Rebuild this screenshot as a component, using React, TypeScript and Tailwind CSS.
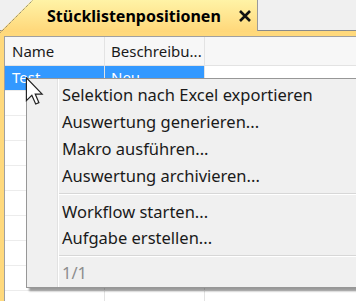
export default function App() {
  const rows = [0, 1, 2, 3, 4, 5, 6, 7, 8, 9];
  return (
    <div className="relative h-[301px] w-[356px] overflow-hidden bg-[#f0f0f0] font-['Noto_Sans',sans-serif] text-[#1a1a1a]">
      {/* tab strip */}
      <div className="flex h-[31px] border-b border-[#8a8a8a]">
        <div className="relative flex h-[32px] w-[257px] shrink-0 items-center bg-gradient-to-b from-[#fff3a6] to-[#ffd779] pl-[47px] [clip-path:polygon(32px_0,100%_0,100%_100%,0_100%)]">
          <span className="text-[16px] leading-none font-bold text-black">Stücklistenpositionen</span>
          <svg className="ml-[17px]" width="14" height="14" viewBox="0 0 14 14">
            <path d="M2 2 L12 12 M12 2 L2 12" stroke="#111" strokeWidth="2.6" />
          </svg>
        </div>
        <div className="h-[31px] w-px shrink-0 bg-[#9a9a9a]" />
      </div>
      <svg className="absolute left-0 top-0" width="34" height="33" viewBox="0 0 34 33">
        <line x1="0.5" y1="32.5" x2="32.5" y2="0.5" stroke="#6b6b6b" strokeWidth="1" strokeDasharray="1 1" />
      </svg>

      {/* yellow frame */}
      <div className="h-[270px] bg-[#ffd97c] pl-[4px] pt-[5px]">
        <div className="h-full border-l border-t border-[#a0a0a0] bg-white">
          {/* header */}
          <div className="flex h-[29px] border-b border-[#e3e3e3] bg-[#f7f7f7] text-[15px]">
            <div className="flex w-[100px] items-center border-r border-[#e3e3e3] pl-[7px]">Name</div>
            <div className="flex w-[100px] items-center border-r border-[#e3e3e3] pl-[6px]">Beschreibu...</div>
          </div>
          {rows.map((r) => (
            <div key={r} className="flex h-[25px] border-b border-[#ececec] text-[15px]">
              <div
                className={
                  r === 0
                    ? "flex w-[100px] items-start overflow-hidden border-r border-[#e3e3e3] bg-[#3399ff] pl-[7px] leading-[22px] text-white"
                    : "w-[100px] border-r border-[#e3e3e3]"
                }
              >
                {r === 0 ? "Test" : ""}
              </div>
              <div
                className={
                  r === 0
                    ? "flex w-[100px] items-start overflow-hidden border-r border-[#e3e3e3] bg-[#3399ff] pl-[6px] leading-[22px] text-white"
                    : "w-[100px] border-r border-[#e3e3e3]"
                }
              >
                {r === 0 ? "Neu" : ""}
              </div>
            </div>
          ))}
        </div>
      </div>

      {/* context menu */}
      <div className="absolute left-[26px] top-[78px] flex h-[210px] w-[340px] border border-[#979797] bg-[#f0f0f0] text-[16.5px] shadow-[3px_3px_2px_rgba(0,0,0,0.4)]">
        <div className="w-[31px] shrink-0 border-r border-[#e2e2e2]" />
        <div className="flex flex-1 flex-col border-l border-white pt-[3px]">
          <div className="flex h-[27px] items-center pl-[3px]">Selektion nach Excel exportieren</div>
          <div className="flex h-[27px] items-center pl-[3px]">Auswertung generieren...</div>
          <div className="flex h-[27px] items-center pl-[3px]">Makro ausführen...</div>
          <div className="flex h-[27px] items-center pl-[3px]">Auswertung archivieren...</div>
          <div className="flex h-[9px] flex-col justify-center">
            <div className="h-px bg-[#d7d7d7]" />
            <div className="h-px bg-white" />
          </div>
          <div className="flex h-[27px] items-center pl-[3px]">Workflow starten...</div>
          <div className="flex h-[27px] items-center pl-[3px]">Aufgabe erstellen...</div>
          <div className="flex h-[8px] flex-col justify-center">
            <div className="h-px bg-[#d7d7d7]" />
            <div className="h-px bg-white" />
          </div>
          <div className="flex h-[27px] items-center pl-[3px] text-[#8d8d8d]">1/1</div>
        </div>
      </div>

      {/* mouse cursor */}
      <svg className="absolute left-[25px] top-[77px]" width="19" height="28" viewBox="0 0 12 19">
        <path d="M0.5 0.5 L0.5 16 L4.2 12.4 L6.8 18.3 L9 17.4 L6.5 11.6 L11.2 11.6 Z" fill="white" stroke="#222" strokeWidth="0.8" strokeLinejoin="miter" />
      </svg>
    </div>
  );
}
